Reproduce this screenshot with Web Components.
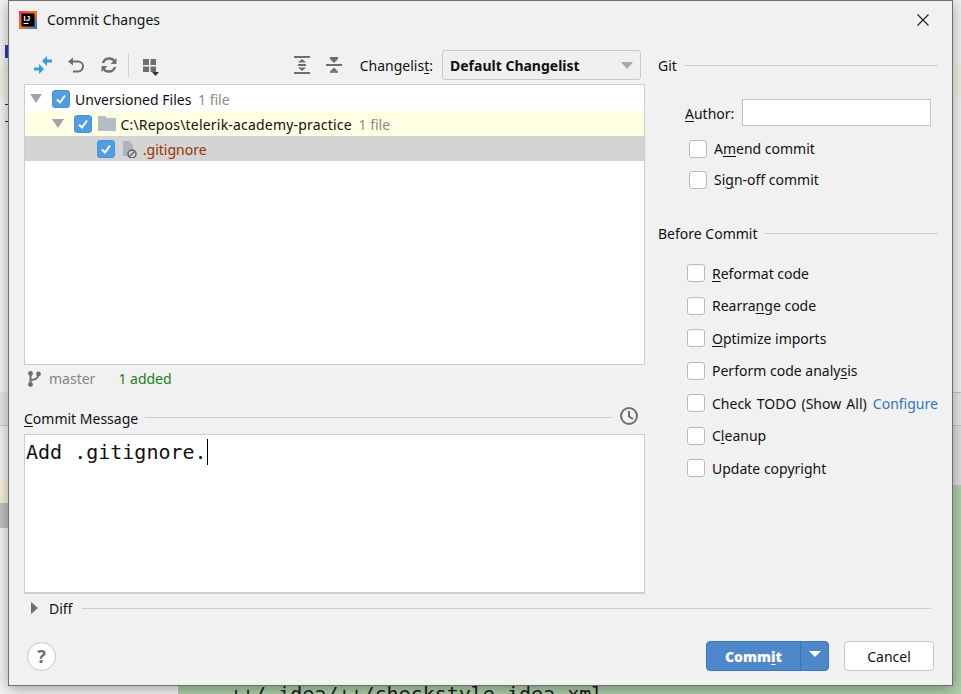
<!doctype html>
<html>
<head>
<meta charset="utf-8" />
<title>Commit Changes</title>
<style>
html, body {
  margin: 0;
  height: 100%;
  overflow: hidden;
  font-family: "Noto Sans", "Open Sans", sans-serif;
  font-size: 14px;
  color: #111;
}
</style>
</head>
<body>
<ij-backdrop></ij-backdrop>
<commit-dialog></commit-dialog>

<script>
const backdropTemplate = document.createElement("template");
backdropTemplate.innerHTML = `
<style>
:host {
  display: flex;
  width: 961px;
  height: 694px;
  overflow: hidden;
}
.col {
  display: flex;
  flex-direction: column;
}
.left { width: 178px; background: #f4f4f4; }
.right { flex: 1; }
.band { flex: none; }
.tan { height: 32px; background: #f1efe3; }
.blue { width: 3px; height: 13px; margin: 45px 0 7px 5px; background: #2b3db5; }
.brace { width: 3px; height: 18px; margin: 7px 0 0 5px; border: solid #3a2a10; border-width: 1px 0; box-sizing: border-box; }
.code {
  flex: 1;
  background: #aed0a9;
  padding: 197px 0 0 52px;
  font: 20px "DejaVu Sans Mono", monospace;
  color: #1a1a1a;
  white-space: nowrap;
}
</style>
<div class="col left">
  <div class="band blue"></div>
  <div class="band tan"></div>
  <div class="band brace"></div>
  <div class="band" style="height:270px"></div>
  <div class="band" style="height:34px;background:#e6e6e6;border-bottom:1px solid #cfcfcf;box-sizing:border-box"></div>
  <div class="band" style="height:52px"></div>
  <div class="band" style="height:25px;background:#f5f3dc"></div>
  <div class="band" style="height:25px;background:#c2c2c2"></div>
</div>
<div class="col right">
  <div class="band" style="height:65px;background:#f2f2f2"></div>
  <div class="band tan"></div>
  <div class="band" style="height:295px;background:#f2f2f2"></div>
  <div class="band" style="height:34px;background:#e6e6e6;border:solid #c4c4c4;border-width:1px 0;box-sizing:border-box"></div>
  <div class="band" style="height:59px;background:#dedede"></div>
  <div class="code">++/.idea/++/checkstyle-idea.xml</div>
</div>
`;

class IjBackdrop extends HTMLElement {
  connectedCallback() {
    const shadowRoot = this.attachShadow({ mode: "open" });
    shadowRoot.appendChild(backdropTemplate.content.cloneNode(true));
  }
}

const checkTemplate = document.createElement("template");
checkTemplate.innerHTML = `
<style>
:host {
  display: flex;
  align-items: center;
  gap: 7px;
  white-space: nowrap;
}
.box {
  flex: none;
  width: 18px;
  height: 18px;
  box-sizing: border-box;
  background: #fff;
  border: 1px solid #b9b9b9;
  border-radius: 3px;
  display: flex;
  align-items: center;
  justify-content: center;
}
:host([checked]) .box {
  background: #4f9ee3;
  border-color: #4a94d6;
}
svg { display: none; }
:host([checked]) svg { display: block; }
</style>
<span class="box">
  <svg width="12" height="12" viewBox="0 0 12 12">
    <path d="M2 6.5 L5 9.5 L10 2.5" fill="none" stroke="#fff" stroke-width="2" />
  </svg>
</span>
<slot></slot>
`;

class IjCheck extends HTMLElement {
  connectedCallback() {
    const shadowRoot = this.attachShadow({ mode: "open" });
    shadowRoot.appendChild(checkTemplate.content.cloneNode(true));
  }
}

const sectionTemplate = document.createElement("template");
sectionTemplate.innerHTML = `
<style>
:host {
  display: flex;
  align-items: center;
  gap: 7px;
  height: 20px;
  white-space: nowrap;
}
i {
  flex: 1;
  height: 1px;
  margin-top: var(--line-shift, 0);
  background: #cdcdcd;
}
</style>
<slot></slot><i></i><slot name="end"></slot>
`;

class IjSection extends HTMLElement {
  connectedCallback() {
    const shadowRoot = this.attachShadow({ mode: "open" });
    shadowRoot.appendChild(sectionTemplate.content.cloneNode(true));
  }
}

const rowTemplate = document.createElement("template");
rowTemplate.innerHTML = `
<style>
:host {
  display: flex;
  align-items: center;
  height: 25px;
  white-space: nowrap;
}
:host([tone="yellow"]) { background: #ffffe4; }
:host([tone="grey"]) { background: #d4d4d4; }
.tri {
  flex: none;
  width: 0;
  height: 0;
  margin: 0 10px 0 5px;
  border: solid transparent;
  border-width: 9px 6px 0;
  border-top-color: #a3a3a3;
}
.tri.none { border-top-color: transparent; }
.icon { display: flex; flex: none; margin-left: 5px; }
.text { padding-top: 2px; }
::slotted(svg) { margin: 0 4px 0 1px; }
::slotted(small) {
  font-size: inherit;
  color: #8a8a8a;
  margin-left: 3px;
}
</style>
<span class="tri"></span>
<ij-check checked></ij-check>
<span class="icon"><slot name="icon"></slot></span>
<span class="text"><slot></slot></span>
`;

class IjTreeRow extends HTMLElement {
  connectedCallback() {
    const shadowRoot = this.attachShadow({ mode: "open" });
    shadowRoot.appendChild(rowTemplate.content.cloneNode(true));
    const level = Number(this.getAttribute("level") || 0);
    this.style.paddingLeft = `${level * 22.4}px`;
    if (this.hasAttribute("leaf")) {
      shadowRoot.querySelector(".tri").classList.add("none");
    }
  }
}

const dialogTemplate = document.createElement("template");
dialogTemplate.innerHTML = `
<style>
:host {
  position: absolute;
  left: 8px;
  top: 0;
  width: 945px;
  height: 686px;
  box-sizing: border-box;
  display: flex;
  flex-direction: column;
  background: #f1f1f1;
  border: 1px solid #6f6f6f;
  box-shadow: 0 3px 14px rgba(0, 0, 0, 0.35);
}
svg { display: block; flex: none; }
u {
  text-decoration-thickness: 1px;
  text-underline-offset: 2px;
}
.title {
  flex: none;
  height: 37px;
  padding: 0 23px 2px 10px;
  display: flex;
  align-items: center;
  gap: 10px;
}
.title .name { flex: 1; }
main {
  flex: none;
  height: 554px;
  display: flex;
  padding-left: 15px;
}
.left {
  width: 621px;
  display: flex;
  flex-direction: column;
}
.toolbar {
  height: 44px;
  display: flex;
  align-items: center;
  padding: 6px 0 0 10px;
  box-sizing: border-box;
}
.sep { width: 1px; height: 24px; background: #d0d0d0; margin: 0 13px 0 10px; }
.spacer { flex: 1; }
.combo {
  width: 199px;
  height: 30px;
  box-sizing: border-box;
  margin: 0 4px 0 9px;
  padding: 0 7px;
  display: flex;
  align-items: center;
  justify-content: space-between;
  background: #efefef;
  border: 1px solid #c9c9c9;
  border-radius: 3px;
  font-weight: 700;
}
.combo::after {
  content: "";
  border: solid transparent;
  border-width: 7px 6px 0;
  border-top-color: #a8a8a8;
}
.tree {
  height: 281px;
  box-sizing: border-box;
  background: #fff;
  border: 1px solid #cdcdcd;
  padding-top: 1px;
}
.path { letter-spacing: 0.2px; }
.status {
  height: 27px;
  display: flex;
  align-items: center;
  padding-left: 4px;
  color: #858585;
}
.status .added { color: #1b7f1b; margin-left: 23px; }
.status .branch { margin-left: 7px; }
.msghead {
  height: 42px;
  display: flex;
  flex-direction: column;
  justify-content: flex-end;
  padding-bottom: 6px;
  box-sizing: border-box;
  --line-shift: -2px;
}
.msghead ij-section { padding-right: 7px; }
.msghead svg { margin-top: -4px; }
.message {
  height: 160px;
  box-sizing: border-box;
  background: #fff;
  border: 1px solid #cdcdcd;
  border-bottom-width: 2px;
  padding: 2px 0 0 1px;
  font: 20px/30px "DejaVu Sans Mono", monospace;
  color: #111;
}
.message i {
  display: inline-block;
  width: 1px;
  height: 26px;
  background: #000;
  vertical-align: -6px;
}
.right {
  width: 280px;
  margin-left: 13px;
  display: flex;
  flex-direction: column;
}
.right .git { margin-top: 15px; }
.author {
  margin-top: 24px;
  padding-left: 27px;
  height: 27px;
  display: flex;
  align-items: center;
  gap: 8px;
}
.author label { padding-top: 2px; }
.author span {
  width: 189px;
  height: 27px;
  box-sizing: border-box;
  margin-left: auto;
  margin-right: 7px;
  background: #fff;
  border: 1px solid #c4c4c4;
}
.opts { margin-top: 7px; padding-left: 31px; }
.opts ij-check { height: 31px; }
.right .before { margin-top: 28px; }
.checks { margin-top: 13.75px; padding-left: 29px; }
.checks ij-check { height: 32.5px; }
.todo { word-spacing: 1.5px; }
a { color: #2f77ba; text-decoration: none; margin-left: 1px; }
.diff {
  flex: none;
  height: 28px;
  display: flex;
  align-items: center;
  padding: 0 21px 0 22px;
  --line-shift: 1px;
}
.diff::before {
  content: "";
  margin-right: 11px;
  border: solid transparent;
  border-width: 6px 0 6px 7px;
  border-left-color: #707070;
}
.diff ij-section { flex: 1; gap: 10px; }
.footer {
  flex: none;
  margin-top: 19px;
  height: 30px;
  display: flex;
  align-items: center;
  padding: 0 18px;
}
.help {
  width: 29px;
  height: 29px;
  box-sizing: border-box;
  border-radius: 50%;
  background: #fff;
  border: 1px solid #c4c4c4;
  color: #6e6e6e;
  font-weight: 700;
  font-size: 18px;
  display: flex;
  align-items: center;
  justify-content: center;
}
.commit {
  display: flex;
  width: 123px;
  height: 30px;
  margin-left: auto;
  box-sizing: border-box;
  background: #4e88c9;
  border: 1px solid #4278b6;
  border-radius: 4px;
  color: #fff;
  font-weight: 700;
}
.commit b {
  width: 93px;
  display: flex;
  align-items: center;
  justify-content: center;
  border-right: 1px solid #3f74b2;
}
.commit b + span {
  flex: 1;
  display: flex;
  align-items: center;
  justify-content: center;
}
.commit b + span::after {
  content: "";
  margin-bottom: 5px;
  border: solid transparent;
  border-width: 6px 6px 0;
  border-top-color: #fff;
}
.cancel {
  width: 90px;
  height: 30px;
  box-sizing: border-box;
  margin-left: 15px;
  display: flex;
  align-items: center;
  justify-content: center;
  background: #fff;
  border: 1px solid #c6c6c6;
  border-radius: 4px;
}
</style>

<div class="title">
  <svg width="18" height="18" viewBox="0 0 18 18">
    <defs>
      <linearGradient id="ij" x1="0" y1="0" x2="1" y2="1">
        <stop offset="0" stop-color="#fe315d" />
        <stop offset="0.5" stop-color="#f97a12" />
        <stop offset="1" stop-color="#087cfa" />
      </linearGradient>
    </defs>
    <rect width="18" height="18" fill="url(#ij)" />
    <rect x="2.5" y="2.5" width="13" height="13" fill="#000" />
    <text x="4.5" y="9.5" font-family="Liberation Sans" font-size="7.5" font-weight="700" letter-spacing="0.5" fill="#fff">IJ</text>
    <rect x="4.5" y="12" width="5" height="1" fill="#fff" />
  </svg>
  <span class="name">Commit Changes</span>
  <svg width="12" height="12" viewBox="0 0 12 12">
    <path d="M0.5 0.5 L11.5 11.5 M11.5 0.5 L0.5 11.5" stroke="#222" stroke-width="1.2" />
  </svg>
</div>

<main>
  <div class="left">
    <div class="toolbar">
      <svg width="18" height="18" viewBox="0 0 18 18" style="margin-right:15px">
        <path d="M18 3.5 H13 V0 L8 5 L13 10 V6.5 H18 Z M0 11.5 H5 V8 L10 13 L5 18 V14.5 H0 Z" fill="#389fd6" />
      </svg>
      <svg width="18" height="18" viewBox="0 0 18 18" style="margin-right:15px">
        <path d="M4 5.5 H11 A5 5 0 0 1 11 15.5 H6" fill="none" stroke="#6e6e6e" stroke-width="2" />
        <path d="M6 1.5 V9.5 L1 5.5 Z" fill="#6e6e6e" />
      </svg>
      <svg width="18" height="18" viewBox="0 0 18 18">
        <path d="M15 6 A6.5 6.5 0 0 0 3 7 M3 12 A6.5 6.5 0 0 0 15 11" fill="none" stroke="#6e6e6e" stroke-width="2.4" />
        <path d="M16.5 2 V8 H10.5 Z M1.5 16 V10 H7.5 Z" fill="#6e6e6e" />
      </svg>
      <span class="sep"></span>
      <svg width="18" height="22" viewBox="0 0 18 22">
        <path d="M1 5 H7 V11 H1 Z M8.5 5 H14 V11 H8.5 Z M1 12.5 H7 V18 H1 Z M8.5 12.5 H14 V18 H8.5 Z" fill="#6e6e6e" />
        <path d="M10 18 H17 L13.5 22 Z" fill="#333" />
      </svg>
      <span class="spacer"></span>
      <svg width="18" height="18" viewBox="0 0 18 18" style="margin-right:14px">
        <path d="M1 1 H17 M1 17 H17 M5 9 H13" stroke="#6e6e6e" stroke-width="2" />
        <path d="M5 6.5 L9 3 L13 6.5 Z M5 11.5 L9 15 L13 11.5 Z" fill="#6e6e6e" />
      </svg>
      <svg width="18" height="18" viewBox="0 0 18 18" style="margin-right:17px">
        <path d="M1 9 H17 M5 2 H13" stroke="#6e6e6e" stroke-width="2" />
        <path d="M5 3 H13 L9 7 Z M5 15.5 L9 11.5 L13 15.5 Z" fill="#6e6e6e" />
        <path d="M5 16 H13" stroke="#6e6e6e" stroke-width="1.6" />
      </svg>
      <span>Changelis<u>t</u>:</span>
      <span class="combo">Default Changelist</span>
    </div>
    <div class="tree">
      <ij-tree-row level="0">Unversioned Files <small>1 file</small></ij-tree-row>
      <ij-tree-row level="1" tone="yellow">
        <svg slot="icon" width="18" height="15" viewBox="0 0 18 15">
          <path d="M0 0 H7 L9 2 H18 V15 H0 Z" fill="#b3bec4" />
        </svg>
        <span class="path">C:\\Repos\\telerik-academy-practice</span> <small>1 file</small>
      </ij-tree-row>
      <ij-tree-row level="2" leaf tone="grey">
        <svg slot="icon" style="margin-right:6px" width="16" height="18" viewBox="0 0 16 18">
          <path d="M2 1 H8 L12 5 V16 H2 Z" fill="#a9b5bc" />
          <circle cx="11" cy="14" r="4" fill="#d4d4d4" stroke="#5e5e5e" stroke-width="1.5" />
          <path d="M8.5 16.5 L13.5 11.5" stroke="#5e5e5e" stroke-width="1.3" />
        </svg>
        <span style="color:#993300">.gitignore</span>
      </ij-tree-row>
    </div>
    <div class="status">
      <svg width="14" height="16" viewBox="0 0 14 16">
        <path d="M2.5 2 V14 M2.5 9 C7 9 10 8 10.5 3.5" fill="none" stroke="#6e6e6e" stroke-width="2" />
        <circle cx="2.5" cy="2.5" r="2.4" fill="#6e6e6e" />
        <circle cx="2.5" cy="13.5" r="2.4" fill="#6e6e6e" />
        <circle cx="10.5" cy="3" r="2.4" fill="#6e6e6e" />
      </svg>
      <span class="branch">master</span>
      <span class="added">1 added</span>
    </div>
    <div class="msghead">
      <ij-section>
        <span><u>C</u>ommit Message</span>
        <svg slot="end" width="18" height="18" viewBox="0 0 18 18">
          <circle cx="9" cy="9" r="8" fill="none" stroke="#6e6e6e" stroke-width="2" />
          <path d="M9 4 V9.5 L13 12" fill="none" stroke="#6e6e6e" stroke-width="2" />
        </svg>
      </ij-section>
    </div>
    <div class="message">Add .gitignore.<i></i></div>
  </div>

  <div class="right">
    <ij-section class="git">Git</ij-section>
    <div class="author"><label><u>A</u>uthor:</label><span></span></div>
    <div class="opts">
      <ij-check><span>A<u>m</u>end commit</span></ij-check>
      <ij-check><span>Si<u>g</u>n-off commit</span></ij-check>
    </div>
    <ij-section class="before">Before Commit</ij-section>
    <div class="checks">
      <ij-check><span><u>R</u>eformat code</span></ij-check>
      <ij-check><span>Rearra<u>n</u>ge code</span></ij-check>
      <ij-check><span><u>O</u>ptimize imports</span></ij-check>
      <ij-check><span>Perform code analy<u>s</u>is</span></ij-check>
      <ij-check><span class="todo">Check TODO (Show All) <a>Configure</a></span></ij-check>
      <ij-check><span>C<u>l</u>eanup</span></ij-check>
      <ij-check><span>Update copyright</span></ij-check>
    </div>
  </div>
</main>

<div class="diff"><ij-section>Diff</ij-section></div>

<div class="footer">
  <span class="help">?</span>
  <span class="commit"><b><span>Comm<u>i</u>t</span></b><span></span></span>
  <span class="cancel">Cancel</span>
</div>
`;

class CommitDialog extends HTMLElement {
  connectedCallback() {
    const shadowRoot = this.attachShadow({ mode: "open" });
    shadowRoot.appendChild(dialogTemplate.content.cloneNode(true));
  }
}

customElements.define("ij-backdrop", IjBackdrop);
customElements.define("ij-check", IjCheck);
customElements.define("ij-section", IjSection);
customElements.define("ij-tree-row", IjTreeRow);
customElements.define("commit-dialog", CommitDialog);
</script>
</body>
</html>
